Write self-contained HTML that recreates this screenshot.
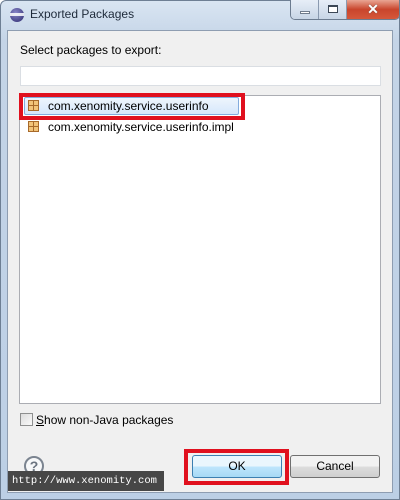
<!DOCTYPE html>
<html><head><style>
*{margin:0;padding:0;box-sizing:border-box}
body{width:400px;height:500px;overflow:hidden;background:#fff;font-family:"Liberation Sans",sans-serif;font-size:12px;color:#000;position:relative}
.frame{position:absolute;left:0;top:0;width:400px;height:500px;background:linear-gradient(#d9e5f2,#c4d4e7 40px,#bccfe5);border:1px solid #6e7f94;border-radius:6px 6px 0 0}
.title{position:absolute;left:30px;top:7px;font-size:12px;color:#1e2a3a}
.logo{position:absolute;left:10px;top:8px;width:14px;height:14px;border-radius:50%;background:radial-gradient(circle at 40% 35%,#8a86c9,#2c2a6e);}
.logo:after{content:"";position:absolute;left:0;top:5px;width:14px;height:3px;background:#fff;opacity:.85}
.btns{position:absolute;left:290px;top:0;height:20px;width:110px;border:1px solid #6c7c90;border-top:none;border-radius:0 0 5px 5px;overflow:hidden;display:flex}
.b{height:19px;background:linear-gradient(#e7eef7,#c7d5e6);border-right:1px solid #8a9ab0;position:relative}
.close{background:linear-gradient(#e9a593,#c9452c 50%,#d5583b);flex:1}
.inner{position:absolute;left:7px;top:30px;width:386px;height:463px;background:#f0f0f0;border:1px solid #8e9db1}
.lbl{position:absolute;left:20px;top:43px;font-size:12px}
.input{position:absolute;left:20px;top:66px;width:361px;height:20px;background:#fff;border:1px solid #dadee3}
.list{position:absolute;left:19px;top:95px;width:362px;height:309px;background:#fff;border:1px solid #abadb3}
.item{position:absolute;left:48px;font-size:12px}
.pk{position:absolute;left:28px;width:11px;height:11px;background:
linear-gradient(#a86a2a,#a86a2a) 4px 0/1px 11px no-repeat,
linear-gradient(#a86a2a,#a86a2a) 0 4px/11px 1px no-repeat,#f2c47a;border:1px solid #a86a2a}
.sel{position:absolute;left:24px;top:97px;width:215px;height:18px;background:linear-gradient(#eef5fd,#d6e7fb);border:1px solid #84acdd;border-radius:2px}
.red{position:absolute;border:4px solid #e0101e}
.cb{position:absolute;left:20px;top:413px;width:13px;height:13px;border:1px solid #8e8f8f;background:linear-gradient(135deg,#dcdcdc,#fafafa)}
.btn{position:absolute;top:455px;height:23px;border:1px solid #707070;border-radius:3px;background:linear-gradient(#f2f2f2 50%,#dddddd 50%,#cfcfcf);text-align:center;line-height:21px;font-size:12px}
.help{position:absolute;left:24px;top:456px;width:20px;height:20px;border:2px solid #7b8490;border-radius:50%;text-align:center;font-weight:bold;color:#6b7480;line-height:16px;font-size:14px;background:#f7f8f9}
.wm{position:absolute;left:8px;top:471px;width:156px;height:20px;background:#474747;color:#fff;font-family:"Liberation Mono",monospace;font-size:10.5px;line-height:20px;padding-left:4px;white-space:nowrap;overflow:hidden}
</style></head><body>
<div class="frame"></div>
<div class="logo"></div>
<div class="title">Exported Packages</div>
<div class="btns">
<div class="b" style="width:28px"><div style="position:absolute;left:9px;top:11px;width:10px;height:3px;background:#fff;border:1px solid #6f7c8c"></div></div>
<div class="b" style="width:28px"><div style="position:absolute;left:9px;top:5px;width:10px;height:8px;border:1px solid #3b4756;border-top-width:2px;background:#fff"></div></div>
<div class="close"><div style="color:#fff;font-weight:bold;font-size:14px;text-align:center;line-height:19px;text-shadow:0 0 1px #333">✕</div></div>
</div>
<div class="inner"></div>
<div class="lbl">Select packages to export:</div>
<div class="input"></div>
<div class="list"></div>
<div class="sel"></div>
<div class="pk" style="top:100px"></div>
<div class="item" style="top:99px">com.xenomity.service.userinfo</div>
<div class="pk" style="top:121px"></div>
<div class="item" style="top:120px">com.xenomity.service.userinfo.impl</div>
<div class="red" style="left:19px;top:93px;width:226px;height:27px"></div>
<div class="cb"></div>
<div style="position:absolute;left:36px;top:413px"><u>S</u>how non-Java packages</div>
<div class="help">?</div>
<div class="btn" style="left:192px;width:90px;border-color:#3c7fb1;background:linear-gradient(#eaf6fd 50%,#bee6fd 50%,#a7d9f5)">OK</div>
<div class="btn" style="left:290px;width:90px">Cancel</div>
<div class="red" style="left:184px;top:449px;width:105px;height:36px"></div>
<div class="wm">http://www.xenomity.com</div>
</body></html>
